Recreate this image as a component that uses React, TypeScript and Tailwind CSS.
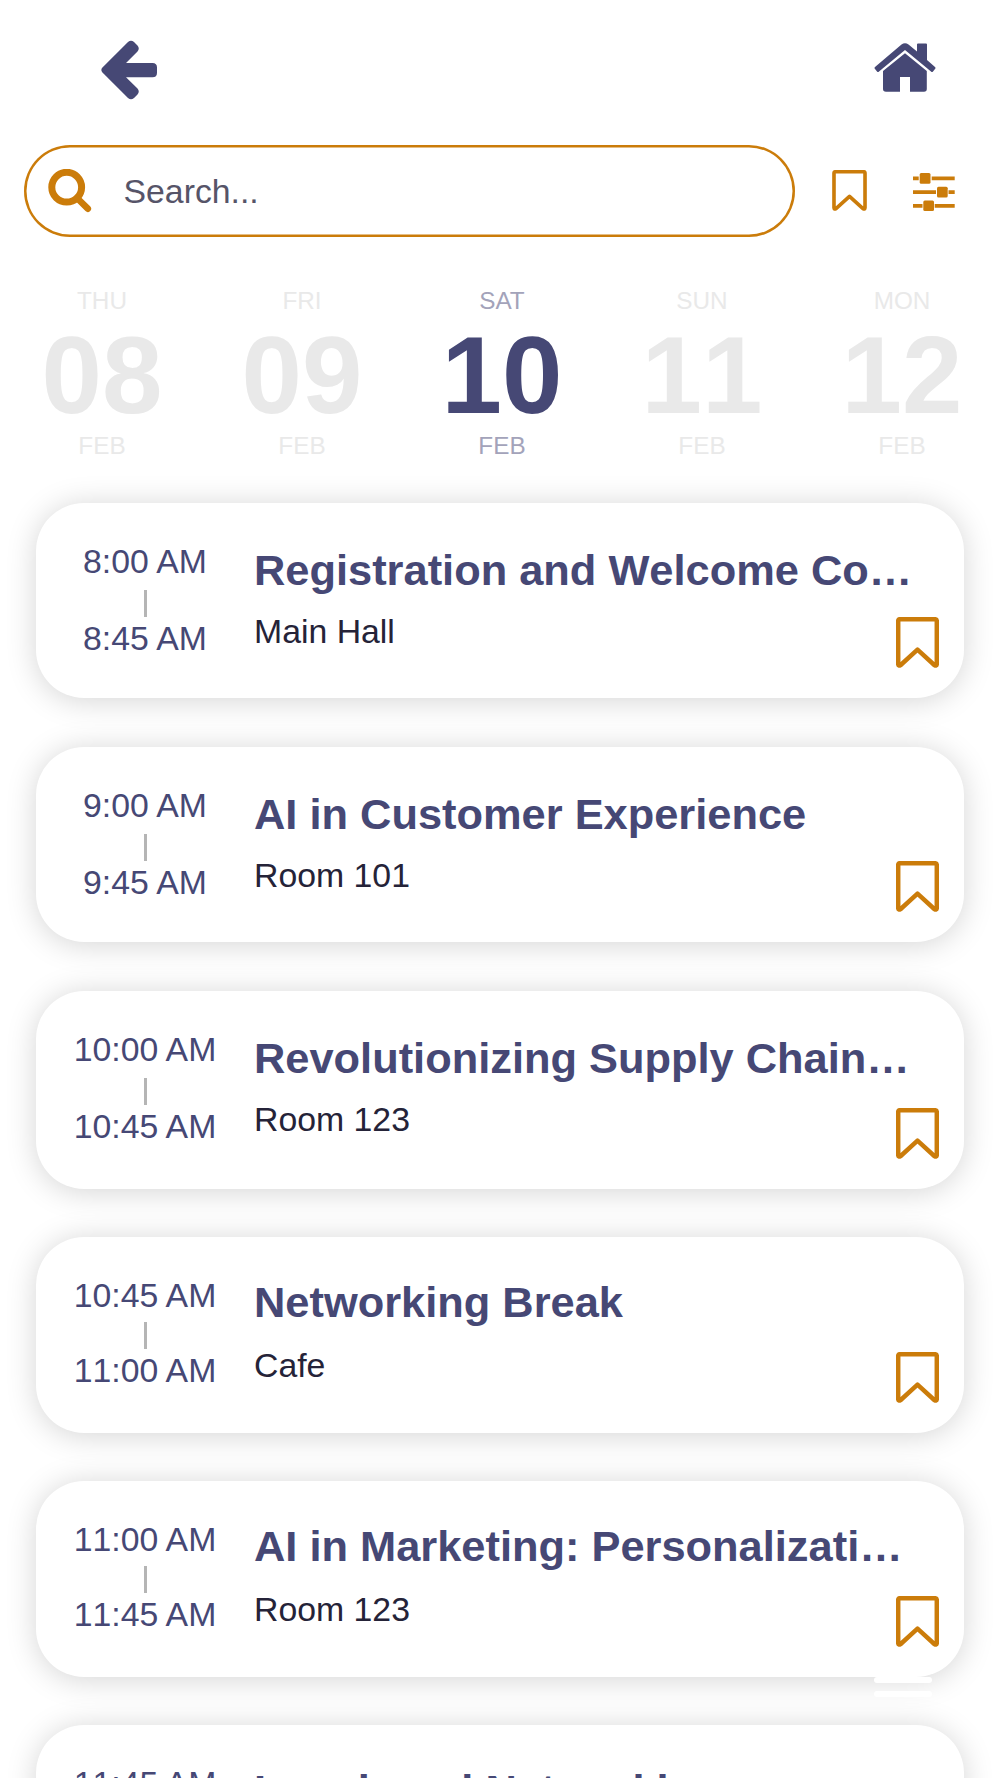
import React from "react";

const days = [
  { day: "THU", date: "08" },
  { day: "FRI", date: "09" },
  { day: "SAT", date: "10", active: true },
  { day: "SUN", date: "11" },
  { day: "MON", date: "12" },
];

type Session = {
  start: string;
  end: string;
  title: string;
  place: string;
  card: string;
  line: string;
  heading: string;
  room: string;
};

const roomy = { card: "h-[195.5px]", line: "mt-[10.2px] mb-[2.3px]", heading: "pt-[42.6px]", room: "mt-[17px]" };
const tight = { card: "h-[195.5px]", line: "mt-[7.7px] mb-[2.3px]", heading: "pt-[40.2px]", room: "mt-[19px]" };

const sessions: Session[] = [
  { start: "8:00 AM", end: "8:45 AM", title: "Registration and Welcome Coffee", place: "Main Hall", ...roomy },
  { start: "9:00 AM", end: "9:45 AM", title: "AI in Customer Experience", place: "Room 101", ...roomy },
  { start: "10:00 AM", end: "10:45 AM", title: "Revolutionizing Supply Chain Management", place: "Room 123", ...roomy, card: "h-[198px]" },
  { start: "10:45 AM", end: "11:00 AM", title: "Networking Break", place: "Cafe", ...tight },
  { start: "11:00 AM", end: "11:45 AM", title: "AI in Marketing: Personalization at Scale", place: "Room 123", ...tight },
  { start: "11:45 AM", end: "12:45 PM", title: "Lunch and Networking", place: "Cafe", ...tight },
];

function Bookmark({ className }: { className: string }) {
  return (
    <svg className={className} viewBox="0 0 43 51" fill="none" stroke="#cb7c0a" strokeWidth="4.5" strokeLinejoin="round">
      <path d="M4 2.200H39Q40.800 2.200 40.800 4V47Q40.800 49.500 38.300 48L21.500 32.700L4.700 48Q2.200 49.500 2.200 47V4Q2.200 2.200 4 2.200Z" />
    </svg>
  );
}

export default function App() {
  return (
    <div className="relative h-[1778px] w-[1000px] overflow-hidden bg-white font-['Liberation_Sans',sans-serif] text-[#464875] [font-kerning:none]">
      <header className="flex h-[145px] items-start justify-between pr-[64px] pl-[101px]">
        <svg className="mt-[40px] h-[60px] w-[57px]" viewBox="0 0 57 60" fill="#464875">
          <path d="M1.200 27.800L27 2Q30 -.5 33 2L36.500 5.500Q39 8.500 36.500 11.500L25 23H51.500Q56 23 56 27.500V32.700Q56 37.200 51.500 37.200H25L36.500 48.500Q39 51.500 36.500 54.500L33 58Q30 60.500 27 58L1.200 32.200Q-.5 30 1.200 27.800Z" />
        </svg>
        <svg className="mt-[43px] h-[49px] w-[62px]" viewBox="0 0 62 49" fill="#464875">
          <path d="M1 24L27.500 1.500Q31 -1 34.500 1.500L43 8.500V1.500Q43 .5 44 .5H52Q53 .5 53 1.500V17L61 24Q62 25 61 26L59 28.500Q58 29.500 57 28.500L31 7L5 28.500Q4 29.500 3 28.500L1 26Q0 25 1 24Z" />
          <path d="M31 10.300L52.800 28V46Q52.800 48.700 50 48.700H36V34H26V48.700H12Q9 48.700 9 46V28Z" />
        </svg>
      </header>

      <div className="flex h-[92px] items-center pl-[24px]">
        <div className="flex h-[92px] w-[771px] items-center rounded-full pl-[24px] shadow-[inset_0_0_0_2.5px_#cb7c0a]">
          <svg className="h-[44px] w-[44px]" viewBox="0 0 44 44" fill="none" stroke="#cb7c0a">
            <circle cx="18.700" cy="18.200" r="14.900" strokeWidth="7" />
            <path d="M29 29L39.800 39.700" strokeWidth="6.600" strokeLinecap="round" />
          </svg>
          <span className="ml-[31.5px] text-[33.8px] leading-[40px] text-[#565468]">Search...</span>
        </div>
        <Bookmark className="mb-[1.5px] ml-[37px] h-[41px] w-[35px]" />
        <svg className="ml-[46px] h-[40px] w-[42px]" viewBox="0 0 42 40" fill="#cb7c0a">
          <path d="M0 5.400H5.700V9.200H0ZM18.700 5.400H41.700V9.200H18.700ZM0 19.200H23V23H0ZM35.500 19.200H41.700V23H35.500ZM0 33H9.500V36.800H0ZM21.700 33H41.700V36.800H21.700Z" />
          <rect x="6.700" y="2" width="10.800" height="10.700" rx="1.500" />
          <rect x="24" y="15.700" width="10.700" height="10.700" rx="1.500" />
          <rect x="10.300" y="29.400" width="10.700" height="10.500" rx="1.500" />
        </svg>
      </div>

      <div className="flex h-[265.6px] pt-[50px] pl-[2px]">
        {days.map((d) => (
          <div key={d.date} className={d.active ? "w-[200px] shrink-0 text-center" : "w-[200px] shrink-0 text-center text-[#e9e9e9]"}>
            <div className={d.active ? "text-[24.3px] leading-[28px] text-[#a3a3ba] [font-kerning:normal]" : "text-[24.3px] leading-[28px]"}>{d.day}</div>
            <div className="h-[117px] pt-[2px] text-[108.7px] leading-[117px] font-bold">{d.date}</div>
            <div className={d.active ? "text-[24.3px] leading-[28px] text-[#a3a3ba]" : "text-[24.3px] leading-[28px]"}>FEB</div>
          </div>
        ))}
      </div>

      <main className="flex flex-col gap-[48.5px] px-[36px]">
        {sessions.map((s) => (
          <article key={s.start} className={`${s.card} flex shrink-0 rounded-[48px] bg-white shadow-[0_2.4px_30px_rgba(0,0,0,0.17)]`}>
            <div className="ml-[9px] flex w-[200px] flex-col items-center pt-[39.3px] text-[33.8px] leading-[38px] [word-spacing:-2px]">
              <span>{s.start}</span>
              <span className={`${s.line} h-[27px] w-[3px] shrink-0 bg-[#b5b5b5]`} />
              <span>{s.end}</span>
            </div>
            <div className={`${s.heading} ml-[9px] w-[664px] shrink-0`}>
              <h2 className="truncate text-[43.4px] leading-[50px] font-bold">{s.title}</h2>
              <p className={`${s.room} text-[33.8px] leading-[38px] text-[#252338]`}>{s.place}</p>
            </div>
            <Bookmark className="mt-auto mb-[30px] -ml-[22px] h-[51px] w-[43px] shrink-0" />
          </article>
        ))}
      </main>

      <div className="absolute top-[1677px] left-[874px] flex flex-col gap-[8px]">
        <span className="h-[6px] w-[58px] rounded-full bg-white" />
        <span className="h-[6px] w-[58px] rounded-full bg-white" />
      </div>
    </div>
  );
}
